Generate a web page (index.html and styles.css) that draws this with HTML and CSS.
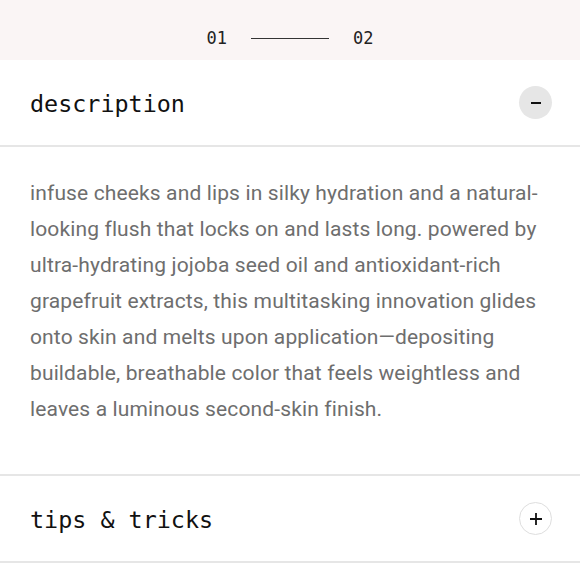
FILE: index.html
```html
<!DOCTYPE html>
<html lang="en">
<head>
<meta charset="utf-8">
<link rel="stylesheet" href="styles.css">
</head>
<body>
<div class="pager">
  <span class="num">01</span>
  <span class="rule"></span>
  <span class="num">02</span>
</div>
<section class="acc">
  <div class="acc-head">
    <h2 class="acc-title">description</h2>
    <button class="toggle toggle-open" aria-label="collapse">
      <svg width="12" height="12" viewBox="0 0 12 12"><path d="M1 6h10" stroke="#111" stroke-width="2"/></svg>
    </button>
  </div>
  <div class="acc-body">
    <p>infuse cheeks and lips in silky hydration and a natural-looking flush that locks on and lasts long. powered by ultra-hydrating jojoba seed oil and antioxidant-rich grapefruit extracts, this multitasking innovation glides onto skin and melts upon application—depositing buildable, breathable color that feels weightless and leaves a luminous second-skin finish.</p>
  </div>
</section>
<section class="acc">
  <div class="acc-head">
    <h2 class="acc-title">tips &amp; tricks</h2>
    <button class="toggle toggle-closed" aria-label="expand">
      <svg width="14" height="14" viewBox="0 0 14 14"><path d="M1 7h12M7 1v12" stroke="#111" stroke-width="1.8"/></svg>
    </button>
  </div>
</section>
</body>
</html>
```
FILE: styles.css
```css
html, body {
  margin: 0;
  padding: 0;
  background: #fff;
}
.pager {
  height: 60px;
  background: #faf5f5;
  display: flex;
  align-items: center;
  justify-content: center;
  gap: 24px;
  padding-top: 16px;
  box-sizing: border-box;
  font-family: "DejaVu Sans Mono", monospace;
  font-size: 17px;
  color: #222;
}
.rule {
  width: 78px;
  height: 1px;
  background: #333;
}
.acc {
  border-bottom: 2px solid #e6e6e6;
}
.acc-head {
  height: 85px;
  display: flex;
  align-items: center;
  justify-content: space-between;
  padding: 0 28px 0 30px;
}
.acc-title {
  margin: 0;
  padding-top: 2px;
  font-family: "DejaVu Sans Mono", monospace;
  font-weight: normal;
  font-size: 23.4px;
  color: #111;
}
.toggle {
  width: 33px;
  height: 33px;
  border-radius: 50%;
  display: flex;
  align-items: center;
  justify-content: center;
  padding: 0;
  box-sizing: border-box;
}
.toggle-open {
  background: #e6e6e6;
  border: none;
}
.toggle-closed {
  background: #fff;
  border: 1.5px solid #dedede;
}
.acc-head + .acc-body {
  border-top: 2px solid #e6e6e6;
}
.acc-body {
  padding: 28px 28px 47px 30px;
}
.acc-body p {
  margin: 0;
  font-family: Roboto, sans-serif;
  font-size: 21px;
  letter-spacing: 0.13px;
  line-height: 36px;
  color: #6e6e6e;
}
```
